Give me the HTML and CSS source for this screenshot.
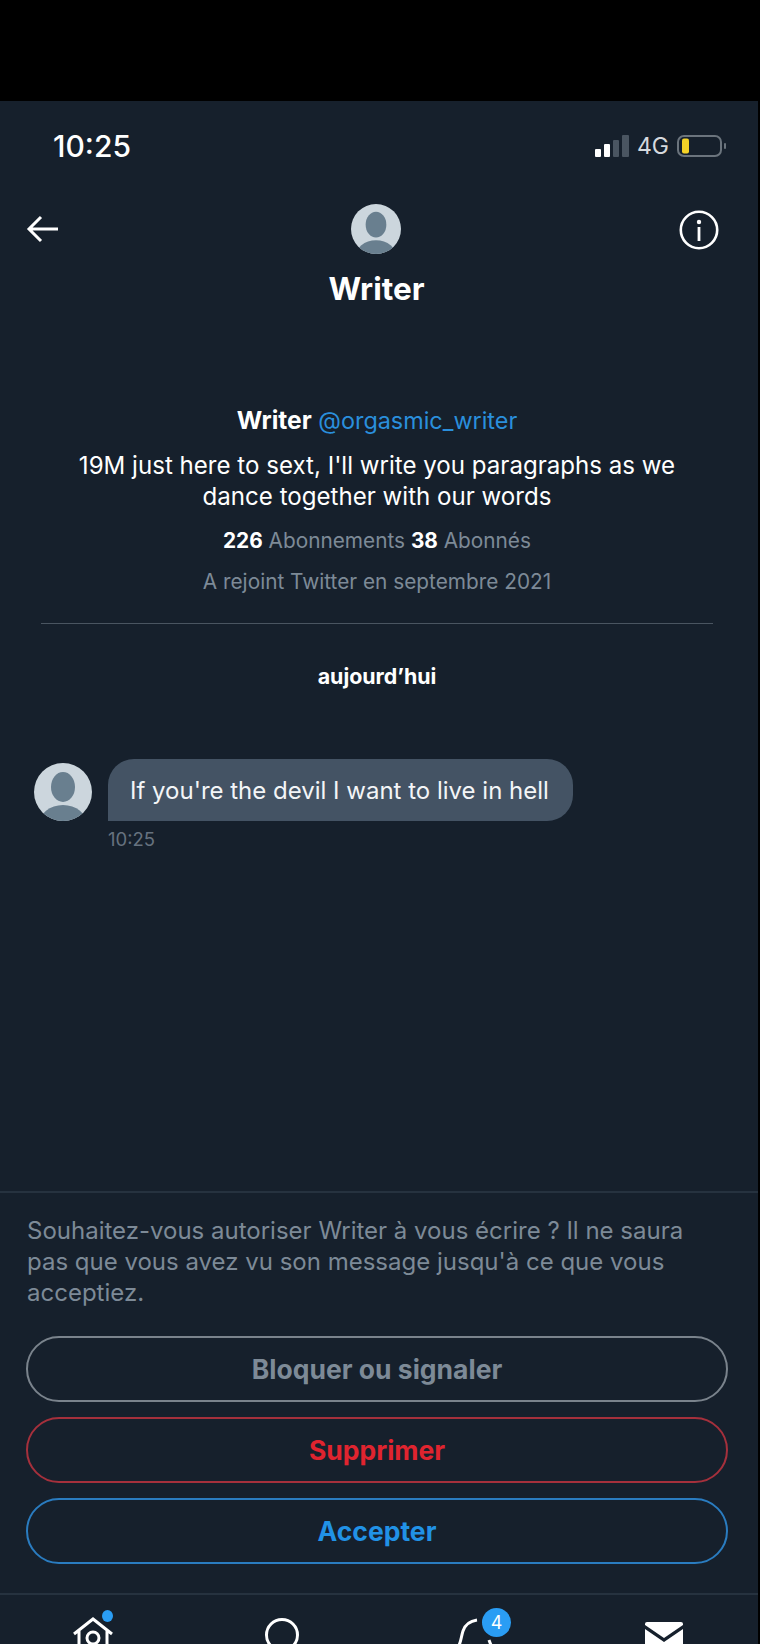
FILE: index.html
```html
<!DOCTYPE html>
<html lang="fr">
<head>
  <meta charset="UTF-8">
  <meta name="viewport" content="width=device-width, initial-scale=1.0">
  <title>Writer</title>
  <link rel="stylesheet" href="styles.css">
</head>
<body>
  <div class="top-strip"></div>

  <div class="screen">
    <div class="status-bar">
      <span class="clock">10:25</span>
      <div class="status-icons">
        <svg class="signal" width="34" height="22" viewBox="0 0 34 22">
          <rect x="0" y="14" width="6" height="8" rx="1" fill="#fff"/>
          <rect x="9" y="9" width="6" height="13" rx="1" fill="#fff"/>
          <rect x="18" y="5" width="6" height="17" rx="1" fill="#4a5561"/>
          <rect x="27" y="0" width="7" height="22" rx="1" fill="#4a5561"/>
        </svg>
        <span class="network">4G</span>
        <svg class="battery" width="50" height="22" viewBox="0 0 50 22">
          <rect x="1" y="1" width="43" height="20" rx="6" fill="none" stroke="#6b747d" stroke-width="2"/>
          <rect x="5" y="3.5" width="7" height="15" rx="2" fill="#f5d327"/>
          <rect x="47" y="8" width="2" height="6" rx="1" fill="#6b747d"/>
        </svg>
      </div>
    </div>

    <header class="nav">
      <svg class="back" width="34" height="30" viewBox="0 0 34 30">
        <path d="M32 15H3M15 3 3 15l12 12" fill="none" stroke="#fff" stroke-width="3"/>
      </svg>
      <div class="nav-title">
        <svg class="avatar avatar-small" viewBox="0 0 58 58">
          <use href="#default-avatar"/>
        </svg>
        <h1>Writer</h1>
      </div>
      <svg class="info" width="40" height="40" viewBox="0 0 40 40">
        <circle cx="20" cy="20" r="18.2" fill="none" stroke="#fff" stroke-width="2.6"/>
        <circle cx="20" cy="12" r="2.2" fill="#fff"/>
        <rect x="18.6" y="17" width="2.8" height="14" fill="#fff"/>
      </svg>
    </header>

    <section class="profile">
      <p class="profile-name"><b>Writer</b> <span class="handle">@orgasmic_writer</span></p>
      <p class="bio">19M just here to sext, I'll write you paragraphs as we dance together with our words</p>
      <p class="stats"><b>226</b> Abonnements <b>38</b> Abonnés</p>
      <p class="joined">A rejoint Twitter en septembre 2021</p>
    </section>

    <div class="day">aujourd’hui</div>

    <section class="thread">
      <div class="message">
        <svg class="avatar" viewBox="0 0 58 58">
          <defs>
            <g id="default-avatar">
              <clipPath id="avatar-clip"><circle cx="29" cy="29" r="29"/></clipPath>
              <circle cx="29" cy="29" r="29" fill="#ccd6dd"/>
              <g clip-path="url(#avatar-clip)">
                <ellipse cx="29" cy="24" rx="12" ry="15" fill="#697f8f"/>
                <ellipse cx="29" cy="62" rx="24" ry="20" fill="#697f8f"/>
              </g>
            </g>
          </defs>
          <use href="#default-avatar"/>
        </svg>
        <div class="bubble">If you're the devil I want to live in hell</div>
      </div>
      <div class="time">10:25</div>
    </section>

    <section class="request">
      <p>Souhaitez-vous autoriser Writer à vous écrire ? Il ne saura pas que vous avez vu son message jusqu'à ce que vous acceptiez.</p>
      <div class="actions">
        <button class="btn btn-grey">Bloquer ou signaler</button>
        <button class="btn btn-red">Supprimer</button>
        <button class="btn btn-blue">Accepter</button>
      </div>
    </section>

    <nav class="tabs">
      <div class="tab">
        <svg width="44" height="44" viewBox="0 0 44 44">
          <path d="M1 19 20 4l19 15M6 15v26h28V15" fill="none" stroke="#fff" stroke-width="3"/>
          <circle cx="20" cy="23" r="6" fill="none" stroke="#fff" stroke-width="3"/>
        </svg>
        <span class="dot"></span>
      </div>
      <div class="tab">
        <svg width="42" height="44" viewBox="0 0 42 44">
          <circle cx="19" cy="20" r="15.5" fill="none" stroke="#fff" stroke-width="3"/>
        </svg>
      </div>
      <div class="tab">
        <svg width="42" height="44" viewBox="0 0 42 44">
          <path d="M5 32c3-4 3-10 5-16 2-6 7-10 14-11" fill="none" stroke="#fff" stroke-width="3"/>
          <path d="M36 25c1 3 2 5 3 7" fill="none" stroke="#fff" stroke-width="3"/>
        </svg>
        <span class="badge">4</span>
      </div>
      <div class="tab">
        <svg width="42" height="44" viewBox="0 0 42 44">
          <path d="M5 7h34a2 2 0 0 1 2 2v1L22 23 3 10V9a2 2 0 0 1 2-2z" fill="#fff"/>
          <path d="M3 14v25h38V14L22 27z" fill="#fff"/>
        </svg>
      </div>
    </nav>
  </div>
</body>
</html>
```

FILE: styles.css
```css
* {
  box-sizing: border-box;
}

html, body {
  margin: 0;
  padding: 0;
  height: 1644px;
  overflow: hidden;
  background-color: #000;
}

body {
  font-family: Inter, "Liberation Sans", sans-serif;
  color: #fff;
}

p, h1 {
  margin: 0;
}

.top-strip {
  height: 101px;
  background-color: #000;
}

.screen {
  height: 1543px;
  margin-right: 2px;
  background-color: #16202c;
  display: flex;
  flex-direction: column;
  overflow: hidden;
}

.status-bar {
  height: 65px;
  padding: 25px 31px 0 53px;
  display: flex;
  justify-content: space-between;
  align-items: center;
}

.clock {
  font-size: 30px;
  font-weight: 500;
}

.status-icons {
  display: flex;
  align-items: center;
  gap: 8px;
}

.network {
  font-size: 23px;
  color: #d5d9dd;
}

.nav {
  height: 160px;
  padding: 0 39px 0 26px;
  display: flex;
  justify-content: space-between;
  align-items: flex-start;
}

.back {
  margin-top: 48px;
}

.info {
  margin-top: 44px;
}

.nav-title {
  padding-top: 38px;
  display: flex;
  flex-direction: column;
  align-items: center;
  gap: 17px;
  margin-left: 14px;
}

.nav-title h1 {
  font-size: 31.5px;
  font-weight: 700;
  line-height: 36px;
}

.avatar {
  display: block;
  width: 58px;
  height: 58px;
  flex-shrink: 0;
}

.avatar-small {
  width: 50px;
  height: 50px;
}

.profile {
  margin: 0 45px 0 41px;
  padding-top: 79px;
  border-bottom: 1.5px solid #4a5561;
  text-align: center;
  height: 298px;
}

.profile-name {
  font-size: 23.4px;
  line-height: 30px;
}

.profile-name b {
  font-size: 24.6px;
}

.handle {
  color: #2a8fdc;
}

.bio {
  margin-top: 15px;
  padding: 0 30px;
  font-size: 24.1px;
  line-height: 30.5px;
}

.stats {
  margin-top: 15px;
  font-size: 20.8px;
  line-height: 28px;
  color: #7d8a97;
}

.stats b {
  color: #fff;
}

.joined {
  margin-top: 13px;
  font-size: 20.8px;
  line-height: 28px;
  color: #7d8a97;
}

.day {
  margin-top: 38px;
  padding-right: 4px;
  text-align: center;
  font-size: 21.4px;
  font-weight: 700;
  line-height: 28px;
}

.thread {
  margin-top: 69px;
  padding-left: 34px;
  flex: 1;
}

.message {
  display: flex;
  align-items: flex-end;
  gap: 16px;
}

.bubble {
  height: 62px;
  padding: 0 24px 0 22px;
  display: flex;
  align-items: center;
  background-color: #445364;
  border-radius: 26px 26px 26px 0;
  font-size: 24px;
  color: #f3f5f7;
}

.time {
  margin: 6px 0 0 74px;
  font-size: 18.5px;
  line-height: 24px;
  color: #66727f;
}

.request {
  padding: 22px 30px 0 26px;
  height: 402px;
  flex-shrink: 0;
  border-top: 2px solid #26323f;
}

.request p {
  padding-left: 1px;
  font-size: 24px;
  line-height: 31px;
  color: #7d8a97;
}

.actions {
  margin-top: 28px;
  display: flex;
  flex-direction: column;
  gap: 15px;
}

.btn {
  height: 66px;
  background: none;
  border: 2.5px solid;
  border-radius: 33px;
  font-family: inherit;
  font-size: 26.5px;
  font-weight: 700;
}

.btn-grey {
  border-color: #7a838c;
  color: #7d8a97;
}

.btn-red {
  border-color: #a5303c;
  color: #e0242f;
}

.btn-blue {
  border-color: #2a7cc0;
  color: #2192e6;
}

.tabs {
  height: 51px;
  flex-shrink: 0;
  border-top: 2px solid #26323f;
  padding-top: 20px;
  display: flex;
}

.tab {
  position: relative;
  flex: 1;
  display: flex;
  justify-content: center;
}

.tab svg {
  flex-shrink: 0;
}

.dot {
  position: absolute;
  left: 102px;
  top: -5px;
  width: 11px;
  height: 12px;
  border-radius: 50%;
  background-color: #2a9df4;
}

.badge {
  position: absolute;
  left: 103px;
  top: -7px;
  width: 29px;
  height: 29px;
  border-radius: 50%;
  background-color: #2a9df4;
  font-size: 18px;
  line-height: 29px;
  text-align: center;
}
```
